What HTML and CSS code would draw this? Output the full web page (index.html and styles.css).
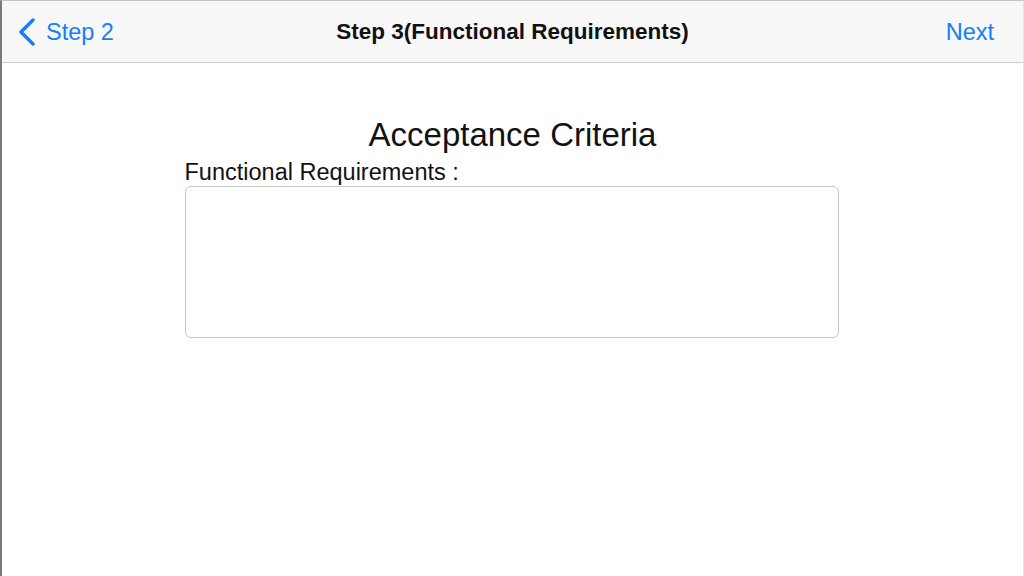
FILE: index.html
```html
<!DOCTYPE html>
<html lang="en">
<head>
    <meta charset="UTF-8">
    <title>Step 3</title>
    <link rel="stylesheet" href="styles.css">
</head>
<body>
    <div class="screen">
        <!-- Navigation bar -->
        <div class="nav-bar">
            <a class="nav-back" href="#">
                <svg class="chevron" width="18" height="28" viewBox="0 0 18 28">
                    <path d="M15 2 L3 14 L15 26" fill="none" stroke="#157efb" stroke-width="3.4" stroke-linecap="round" stroke-linejoin="round"/>
                </svg>
                <span>Step 2</span>
            </a>
            <h1 class="nav-title">Step 3(Functional Requirements)</h1>
            <a class="nav-next" href="#">Next</a>
        </div>

        <!-- Form -->
        <div class="content">
            <h2 class="section-title">Acceptance Criteria</h2>
            <div class="field">
                <label for="functional">Functional Requirements :</label>
                <textarea id="functional"></textarea>
            </div>
        </div>
    </div>
</body>
</html>
```

FILE: styles.css
```css
html, body {
    margin: 0;
    height: 100%;
}

body {
    font-family: "Liberation Sans", Arial, sans-serif;
    background: #ffffff;
    color: #111;
}

.screen {
    height: 576px;
    box-sizing: border-box;
    border-top: 1px solid #c4c4c4;
    border-left: 2px solid #7a7a7a;
    border-right: 1px solid #e6e6e6;
    display: flex;
    flex-direction: column;
}

/* Navigation bar */
.nav-bar {
    height: 62px;
    background: #f7f7f7;
    border-bottom: 1px solid #cfcfcf;
    display: flex;
    align-items: center;
    justify-content: space-between;
    padding: 1px 29px 0 16px;
    box-sizing: border-box;
    position: relative;
}

.nav-back, .nav-next {
    color: #157efb;
    text-decoration: none;
    font-size: 23.5px;
    display: flex;
    align-items: center;
}

.nav-back .chevron {
    margin-right: 10px;
}

.nav-title {
    position: absolute;
    left: 0;
    right: 0;
    text-align: center;
    margin: 0;
    font-size: 22.5px;
    font-weight: bold;
    color: #111;
    pointer-events: none;
}

/* Content */
.content {
    display: flex;
    flex-direction: column;
    align-items: center;
    padding-top: 53px;
}

.section-title {
    margin: 0;
    font-size: 33px;
    font-weight: normal;
    color: #111;
}

.field {
    width: 654px;
    margin-top: 5px;
    margin-left: -2px;
}

.field label {
    display: block;
    font-size: 23.5px;
    margin-bottom: 0;
}

.field textarea {
    display: block;
    width: 100%;
    height: 152px;
    box-sizing: border-box;
    border: 1px solid #c6c6c6;
    border-radius: 6px;
    resize: none;
    outline: none;
    font-family: inherit;
    font-size: 18px;
}
```
